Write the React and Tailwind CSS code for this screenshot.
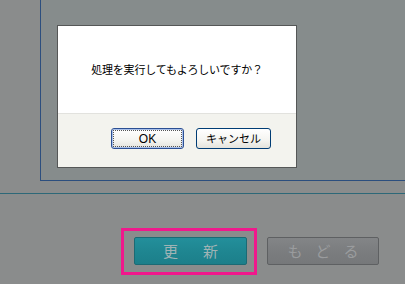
import React from "react";

const jp = { fontFamily: '"Noto Sans CJK JP", "Noto Sans", sans-serif' };

export default function App() {
  return (
    <div className="relative w-[405px] h-[284px] overflow-hidden bg-[#8a8c8c]" style={jp}>
      <div className="flex h-[181px]">
        <div className="w-[40px]" />
        <div className="flex-1 border-l border-b border-[#2c4e7e] bg-[#868c8c]" />
      </div>
      <div className="h-[12px]" />
      <div className="h-px bg-[#2d6878]" />
      <div className="flex items-start pt-[34px] pl-[121px]">
        <div className="border-[3px] border-[#f0188c] pl-[10px] pr-[7px] pt-[6px] pb-[7px]">
          <div className="flex h-[28px] w-[113px] items-center justify-center gap-[25px] rounded-[2px] border border-[#1b6a74] bg-[linear-gradient(180deg,#238f9b_0%,#1f8691_50%,#1c7f8a_100%)] text-[15px] text-[#9fb3b5]">
            <span>更</span>
            <span>新</span>
          </div>
        </div>
        <div className="ml-[10px] mt-[9px] flex h-[28px] w-[112px] items-center justify-center gap-[13px] rounded-[2px] border border-[#5e6062] bg-[linear-gradient(180deg,#838587_0%,#7b7d7f_50%,#76787a_100%)] text-[15px] text-[#9a9c9e]">
          <span>も</span>
          <span>ど</span>
          <span>る</span>
        </div>
      </div>

      {/* modal dialog */}
      <div className="absolute left-[57px] top-[25px] flex h-[143px] w-[240px] flex-col border border-[#555757] bg-white">
        <div className="flex h-[87px] items-center justify-center text-[11px] text-black tracking-[-0.2px]">
          処理を実行してもよろしいですか？
        </div>
        <div className="flex flex-1 gap-[12px] border-t border-[#e2e2de] bg-[#f3f3ee] pl-[53px] pt-[14px]">
          <button className="flex h-[21px] w-[73px] items-center justify-center rounded-[3px] border border-[#2b4f93] bg-[linear-gradient(180deg,#ffffff_0%,#f4f4f0_60%,#e4e3dc_100%)] p-[1px] shadow-[inset_0_0_0_1px_#a9c0ea]">
            <span className="flex h-full w-full items-center justify-center border border-dotted border-[#555] text-[12px] leading-none text-black" style={{ fontFamily: '"Liberation Sans", sans-serif' }}>
              OK
            </span>
          </button>
          <button className="flex h-[21px] w-[75px] items-center justify-center rounded-[3px] border border-[#003c74] bg-[linear-gradient(180deg,#ffffff_0%,#f4f4f0_60%,#e4e3dc_100%)] text-[11px] leading-none text-black">
            キャンセル
          </button>
        </div>
      </div>
    </div>
  );
}
